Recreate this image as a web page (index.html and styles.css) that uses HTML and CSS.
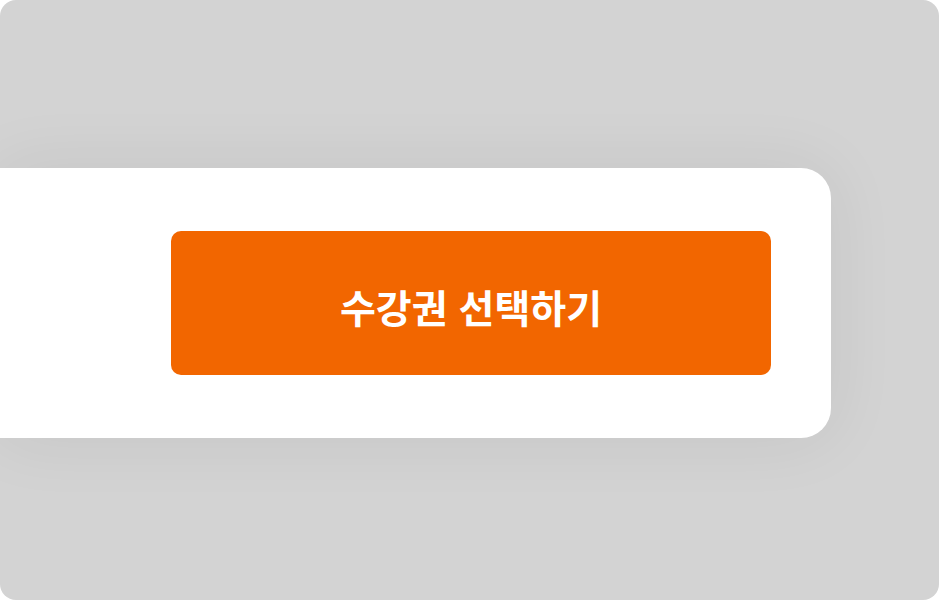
FILE: index.html
```html
<!DOCTYPE html>
<html lang="ko">
<head>
<meta charset="utf-8">
<link rel="stylesheet" href="styles.css">
</head>
<body>
<div class="frame">
  <div class="sheet">
    <button class="cta">수강권 선택하기</button>
  </div>
</div>
</body>
</html>
```
FILE: styles.css
```css
html, body {
  margin: 0;
  padding: 0;
  background: #ffffff;
}
.frame {
  width: 939px;
  height: 600px;
  box-sizing: border-box;
  background: #d3d3d3;
  border-radius: 16px;
  padding-top: 168px;
  overflow: hidden;
}
.sheet {
  width: 831px;
  height: 270px;
  box-sizing: border-box;
  background: #ffffff;
  border-radius: 0 30px 30px 0;
  padding: 63px 60px 63px 0;
  display: flex;
  justify-content: flex-end;
  box-shadow: 0 0 70px rgba(0, 0, 0, 0.07);
}
.cta {
  width: 600px;
  height: 144px;
  border: none;
  border-radius: 10px;
  background: #f26600;
  color: #ffffff;
  font-family: "Noto Sans CJK KR", "Noto Sans", sans-serif;
  font-weight: 700;
  font-size: 39px;
  line-height: 1;
  padding: 6px 0 0;
  cursor: pointer;
}
```
